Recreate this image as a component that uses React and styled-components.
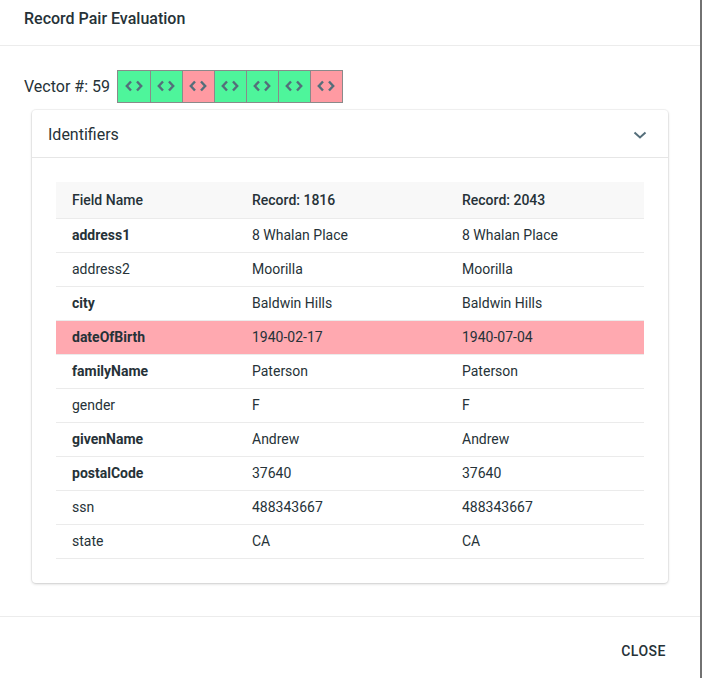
import React from "react";
import styled, { createGlobalStyle } from "styled-components";

const Global = createGlobalStyle`
  html, body { margin: 0; padding: 0; background: #727272; }
  body { font-family: Roboto, "Noto Sans", sans-serif; color: #263238; }
  * { box-sizing: border-box; }
`;

const Dialog = styled.div`
  width: 700px;
  height: 678px;
  background: #fff;
  display: flex;
  flex-direction: column;
`;

const TitleBar = styled.div`
  height: 46px;
  padding: 8px 24px 0;
  border-bottom: 1px solid #ececec;
  font-size: 16px;
  font-weight: 500;
  line-height: 21px;
  color: #263238;
`;

const Content = styled.div`
  padding-top: 24px;
  flex: 1;
`;

const VectorRow = styled.div`
  display: flex;
  align-items: center;
  padding-left: 24px;
  height: 32px;
`;

const VectorLabel = styled.span`
  font-size: 16px;
  margin-right: 7px;
  color: #263238;
`;

const Cells = styled.div`
  display: flex;
  border: 1px solid #8a8a8a;
`;

const Cell = styled.div`
  width: 32px;
  height: 31px;
  display: flex;
  align-items: center;
  justify-content: center;
  background: ${(p) => (p.$match ? "#4ef59b" : "#ff9aa2")};
  border-left: ${(p) => (p.$first ? "none" : "1px solid #8a8a8a")};
`;

const Card = styled.div`
  margin: 8px 32px 0;
  border-radius: 4px;
  background: #fff;
  box-shadow: 0 1px 3px rgba(0,0,0,0.18), 0 0 0 1px rgba(0,0,0,0.04);
`;

const CardHeader = styled.div`
  height: 48px;
  display: flex;
  align-items: center;
  justify-content: space-between;
  padding: 2px 21px 0 16px;
  border-bottom: 1px solid #e6e6e6;
  font-size: 16px;
  color: #263238;
`;

const CardBody = styled.div`
  padding: 24px;
`;

const Table = styled.table`
  width: 100%;
  border-collapse: collapse;
  font-size: 14px;
`;

const Th = styled.th`
  text-align: left;
  font-weight: 500;
  height: 36px;
  padding: 0 16px;
  background: #f8f8f8;
  border-bottom: 1px solid #ebebeb;
  width: ${(p) => p.$w || "auto"};
  color: #263238;
`;

const Tr = styled.tr`
  background: ${(p) => (p.$diff ? "#ffa9b0" : "transparent")};
`;

const Td = styled.td`
  height: 34px;
  padding: 0 16px;
  border-bottom: 1px solid #ebebeb;
  font-weight: ${(p) => (p.$bold ? 700 : 400)};
  color: #263238;
`;

const Footer = styled.div`
  height: 62px;
  border-top: 1px solid #ececec;
  display: flex;
  align-items: center;
  justify-content: flex-end;
  padding: 6px 26px 0 0;
`;

const Button = styled.button`
  background: none;
  border: none;
  font-family: Roboto, sans-serif;
  font-size: 14px;
  font-weight: 500;
  letter-spacing: 0.5px;
  color: #263238;
  padding: 6px 8px;
`;

const CodeIcon = () => (
  <svg width="20" height="14" viewBox="0 0 20 14" fill="none" stroke="#546e7a" strokeWidth="2.4">
    <polyline points="7,2.5 2.8,7 7,11.5" />
    <polyline points="13,2.5 17.2,7 13,11.5" />
  </svg>
);

const Chevron = () => (
  <svg width="14" height="10" viewBox="0 0 14 10" fill="none" stroke="#546e7a" strokeWidth="2">
    <polyline points="1.5,2.5 7,7.5 12.5,2.5" />
  </svg>
);

const vector = [true, true, false, true, true, true, false];

const rows = [
  ["address1", "8 Whalan Place", "8 Whalan Place", true],
  ["address2", "Moorilla", "Moorilla", false],
  ["city", "Baldwin Hills", "Baldwin Hills", true],
  ["dateOfBirth", "1940-02-17", "1940-07-04", true, true],
  ["familyName", "Paterson", "Paterson", true],
  ["gender", "F", "F", false],
  ["givenName", "Andrew", "Andrew", true],
  ["postalCode", "37640", "37640", true],
  ["ssn", "488343667", "488343667", false],
  ["state", "CA", "CA", false],
];

export default function App() {
  return (
    <>
      <Global />
      <Dialog>
        <TitleBar>Record Pair Evaluation</TitleBar>
        <Content>
          <VectorRow>
            <VectorLabel>Vector #: 59</VectorLabel>
            <Cells>
              {vector.map((m, i) => (
                <Cell key={i} $match={m} $first={i === 0}>
                  <CodeIcon />
                </Cell>
              ))}
            </Cells>
          </VectorRow>
          <Card>
            <CardHeader>
              <span>Identifiers</span>
              <Chevron />
            </CardHeader>
            <CardBody>
              <Table>
                <thead>
                  <tr>
                    <Th $w="180px">Field Name</Th>
                    <Th $w="210px">Record: 1816</Th>
                    <Th>Record: 2043</Th>
                  </tr>
                </thead>
                <tbody>
                  {rows.map(([f, a, b, bold, diff]) => (
                    <Tr key={f} $diff={diff}>
                      <Td $bold={bold}>{f}</Td>
                      <Td>{a}</Td>
                      <Td>{b}</Td>
                    </Tr>
                  ))}
                </tbody>
              </Table>
            </CardBody>
          </Card>
        </Content>
        <Footer>
          <Button>CLOSE</Button>
        </Footer>
      </Dialog>
    </>
  );
}
